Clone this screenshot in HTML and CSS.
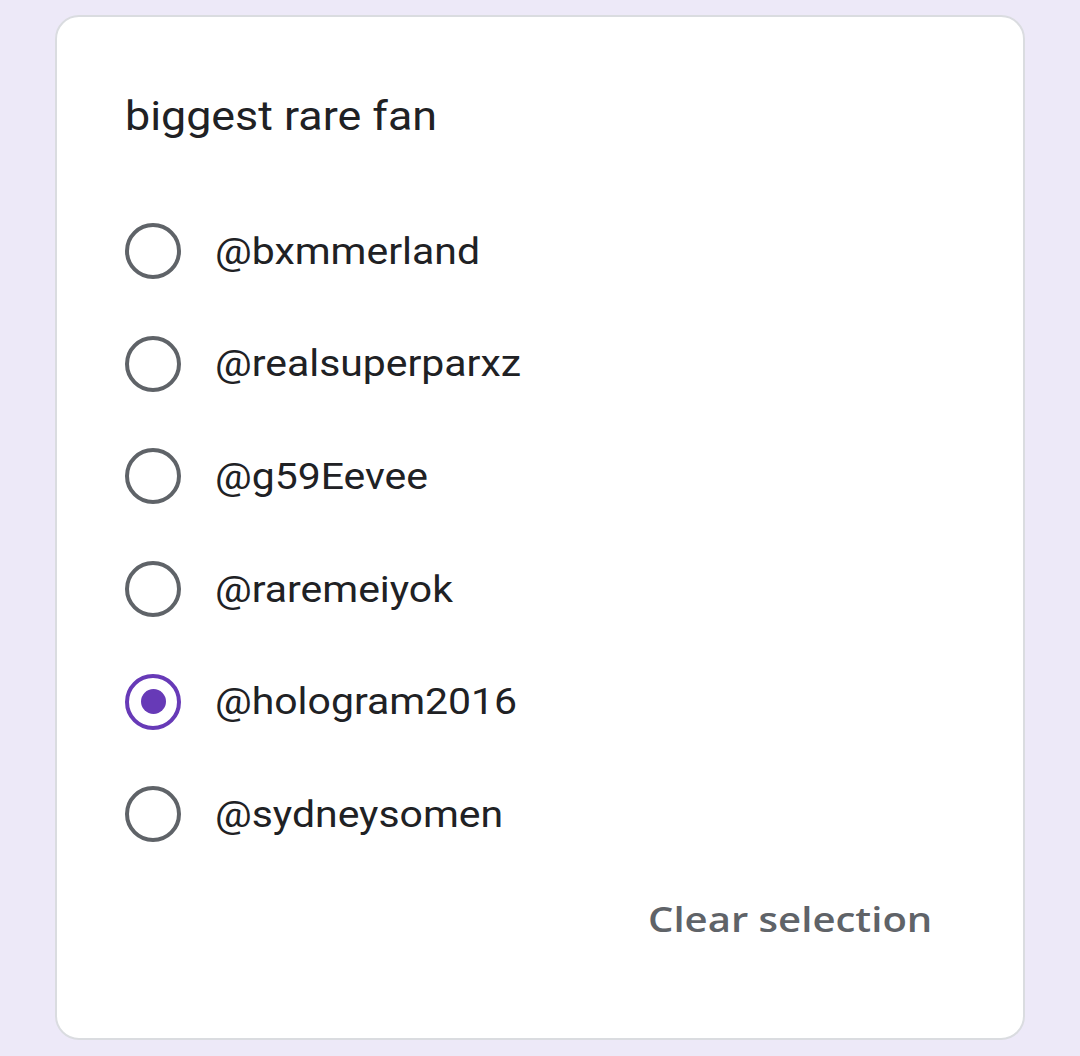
FILE: index.html
```html
<!DOCTYPE html>
<html lang="en">
<head>
  <meta charset="UTF-8" />
  <meta name="viewport" content="width=device-width, initial-scale=1.0" />
  <title>biggest rare fan</title>
  <link rel="stylesheet" href="styles.css">
</head>
<body>
  <div class="page">
    <div class="card">
      <h2 class="question"><span class="wide">biggest rare fan</span></h2>

      <ul class="options">
        <li class="option"><span class="radio"></span><span class="wide">@bxmmerland</span></li>
        <li class="option"><span class="radio"></span><span class="wide">@realsuperparxz</span></li>
        <li class="option"><span class="radio"></span><span class="wide">@g59Eevee</span></li>
        <li class="option"><span class="radio"></span><span class="wide">@raremeiyok</span></li>
        <li class="option"><span class="radio checked"></span><span class="wide">@hologram2016</span></li>
        <li class="option"><span class="radio"></span><span class="wide">@sydneysomen</span></li>
      </ul>

      <div class="actions">
        <button class="clear"><span class="wide">Clear selection</span></button>
      </div>
    </div>
  </div>
</body>
</html>
```

FILE: styles.css
```css
:root {
  --bg: #ede9f8;
  --text: #202124;
  --grey: #5f6368;
  --purple: #673ab7;
  --border: #dadce0;
}

body {
  margin: 0;
  background: var(--bg);
  font-family: Roboto, 'Noto Sans', sans-serif;
  color: var(--text);
}

.page {
  padding: 15px 55px 16px 55px;
}

.card {
  box-sizing: border-box;
  height: 1025px;
  background: white;
  border: 2px solid var(--border);
  border-radius: 24px;
  padding: 76px 91px 0 68px;
}

/* the app draws its text a bit wider than plain Roboto */
.wide {
  display: inline-block;
  transform: scaleX(1.12);
  transform-origin: left center;
}

.question {
  margin: 0;
  font-size: 40px;
  line-height: 48px;
  font-weight: 400;
}

.options {
  list-style: none;
  margin: 54px 0 0;
  padding: 0;
}

.option {
  display: flex;
  align-items: center;
  gap: 34px;
  height: 112.6px;
  font-size: 37px;
}

.option .wide {
  transform: scaleX(1.106);
}

.radio {
  box-sizing: border-box;
  width: 56px;
  height: 56px;
  border: 4.5px solid var(--grey);
  border-radius: 50%;
  display: flex;
  align-items: center;
  justify-content: center;
  flex-shrink: 0;
}

.radio.checked {
  border-color: var(--purple);
}

.radio.checked::after {
  content: "";
  width: 25px;
  height: 25px;
  border-radius: 50%;
  background: var(--purple);
}

.actions {
  display: flex;
  justify-content: flex-end;
  margin-top: 26px;
}

.clear {
  background: none;
  border: none;
  padding: 0;
  font-family: 'Open Sans', sans-serif;
  font-weight: 600;
  font-size: 35px;
  line-height: 44px;
  color: var(--grey);
  cursor: pointer;
}

.clear .wide {
  transform: scaleX(1.145);
  transform-origin: right center;
}
```
